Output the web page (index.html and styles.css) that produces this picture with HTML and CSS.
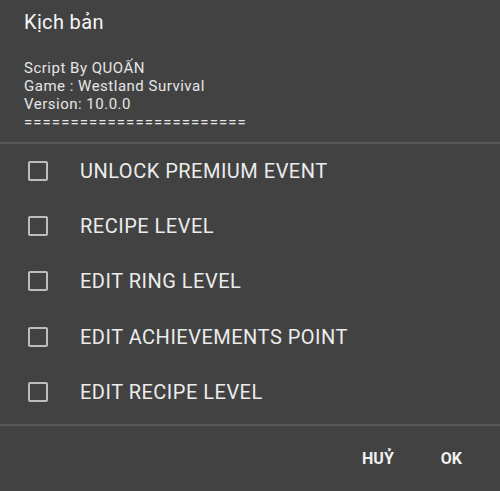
FILE: index.html
```html
<!DOCTYPE html>
<html lang="vi">
<head>
    <meta charset="UTF-8">
    <meta name="viewport" content="width=device-width, initial-scale=1.0">
    <title>Kịch bản</title>
    <link rel="stylesheet" href="styles.css">
</head>
<body>

<div class="dialog">
    <div class="dialog-head">
        <h2 class="dialog-title">Kịch bản</h2>
        <div class="dialog-message">
            <div>Script By QUOẤN</div>
            <div>Game : Westland Survival</div>
            <div>Version: 10.0.0</div>
            <div class="rule">========================</div>
        </div>
    </div>
    <ul class="choice-list">
        <li class="choice"><span class="box"></span><span class="label">UNLOCK PREMIUM EVENT</span></li>
        <li class="choice"><span class="box"></span><span class="label">RECIPE LEVEL</span></li>
        <li class="choice"><span class="box"></span><span class="label">EDIT RING LEVEL</span></li>
        <li class="choice"><span class="box"></span><span class="label">EDIT ACHIEVEMENTS POINT</span></li>
        <li class="choice"><span class="box"></span><span class="label">EDIT RECIPE LEVEL</span></li>
    </ul>
    <div class="dialog-actions">
        <button class="action">HUỶ</button>
        <button class="action">OK</button>
    </div>
</div>

</body>
</html>
```

FILE: styles.css
```css
body {
    font-family: Roboto, "Noto Sans", sans-serif;
    background-color: #424242;
    color: #ececec;
    margin: 0;
    padding: 0;
}
.dialog {
    width: 500px;
    height: 491px;
    display: flex;
    flex-direction: column;
}
.dialog-head {
    padding: 10px 24px 11px 24px;
    border-bottom: 2px solid #575757;
}
.dialog-title {
    margin: 0;
    font-size: 20px;
    font-weight: 400;
    line-height: 24px;
    letter-spacing: 0.35px;
    color: #f5f5f5;
}
.dialog-message {
    margin-top: 25px;
    font-size: 15px;
    line-height: 18px;
    letter-spacing: 0.5px;
    color: #e6e6e6;
}
.dialog-message .rule {
    letter-spacing: 1.05px;
}
.choice-list {
    list-style: none;
    margin: -1px 0 0 0;
    padding: 0 0 5px 0;
    border-bottom: 2px solid #575757;
}
.choice {
    height: 55.3px;
    display: flex;
    align-items: center;
    padding-left: 28px;
}
.box {
    width: 16px;
    height: 16px;
    border: 2px solid #bdbdbd;
    border-radius: 2px;
    margin-right: 32px;
}
.label {
    font-size: 20px;
    letter-spacing: 0.5px;
    color: #ececec;
}
.dialog-actions {
    flex: 1;
    display: flex;
    justify-content: flex-end;
    align-items: center;
    gap: 15px;
    padding-right: 22px;
}
.action {
    background: none;
    border: none;
    color: #f0f0f0;
    font-family: Roboto, sans-serif;
    font-size: 16px;
    font-weight: 700;
    padding: 8px 16px;
}
```
